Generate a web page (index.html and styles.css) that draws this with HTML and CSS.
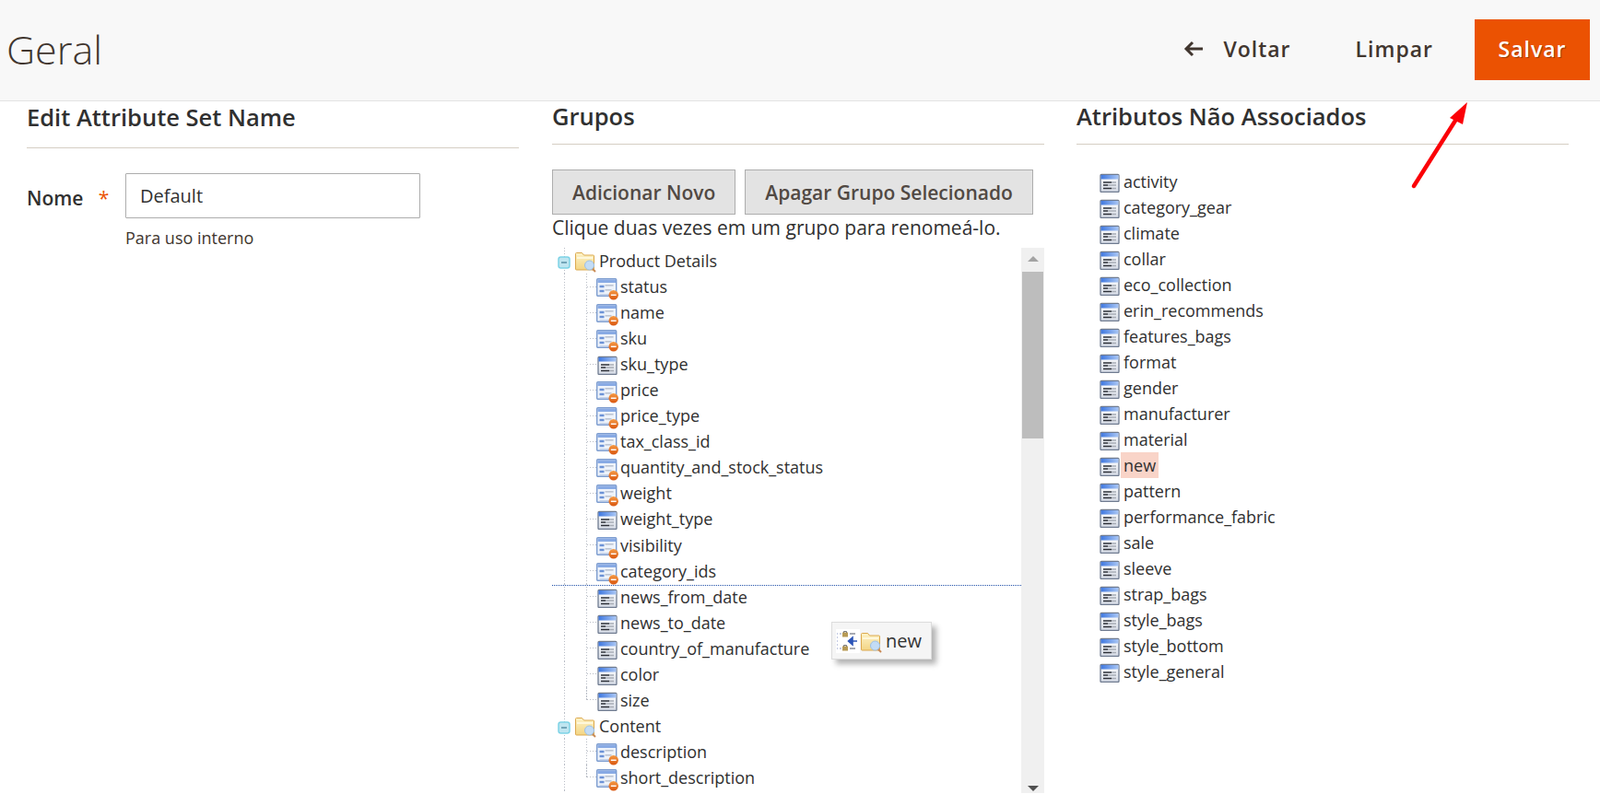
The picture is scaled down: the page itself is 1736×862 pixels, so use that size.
FILE: index.html
```html
<!DOCTYPE html>
<html lang="pt">
<head>
<meta charset="utf-8">
<title>Geral</title>
<link rel="stylesheet" href="styles.css">
</head>
<body>
<svg class="defs" width="0" height="0" aria-hidden="true">
  <defs>
    <linearGradient id="bar" x1="0" y1="0" x2="1" y2="0"><stop offset="0" stop-color="#3f78e0"/><stop offset="1" stop-color="#a9c6f4"/></linearGradient>
    <linearGradient id="body" x1="0" y1="0" x2="0" y2="1"><stop offset="0" stop-color="#ffffff"/><stop offset="1" stop-color="#d5dbe6"/></linearGradient>
    <linearGradient id="folder" x1="0" y1="0" x2="0" y2="1"><stop offset="0" stop-color="#fdf3c8"/><stop offset="1" stop-color="#f3d584"/></linearGradient>
    <linearGradient id="orange" x1="0" y1="0" x2="0" y2="1"><stop offset="0" stop-color="#f59a45"/><stop offset="1" stop-color="#d9560f"/></linearGradient>
    <symbol id="attr" viewBox="-1 -3 24 24">
      <rect x="1" y="1.500" width="20" height="19" rx="1" fill="url(#body)" stroke="#6f7b90" stroke-width="1.300"/>
      <rect x="1.500" y="2" width="19" height="4.500" fill="url(#bar)"/>
      <path d="M4 10h9M4 13h5M4 16.500h9" stroke="#2d3038" stroke-width="1.600"/>
      <path d="M13 10h5M9 13h9M13 16.500h5" stroke="#a7acb5" stroke-width="1.300"/>
    </symbol>
    <symbol id="attr-locked" viewBox="0 0 24 24" overflow="visible">
      <rect x="0.700" y="3.700" width="21" height="18.600" rx="1" fill="#eef3fb" stroke="#7c9ccf" stroke-width="1.400"/>
      <rect x="1.500" y="4.500" width="19.500" height="3.500" fill="#88aae4"/>
      <path d="M3.500 12h5M3.500 17h5" stroke="#6d93d6" stroke-width="2.600"/>
      <path d="M9.500 10.800h9M9.500 15.800h7" stroke="#aeb7c6" stroke-width="1.200"/>
      <path d="M3.500 20.500h13" stroke="#c5d3ea" stroke-width="1"/>
      <circle cx="18.700" cy="21.300" r="5.200" fill="url(#orange)"/>
      <path d="M15.800 21.300h5.800" stroke="#ffffff" stroke-width="1.500"/>
    </symbol>
    <symbol id="folder-search" viewBox="0 -1 25 24" overflow="visible">
      <path d="M1.500 20V3.500q0-1 1-1h6l2 2.500h10q1 0 1 1V20q0 1-1 1h-18q-1 0-1-1z" fill="url(#folder)" stroke="#dca94e"/>
      <path d="M3 8h17" stroke="#fffbe8" stroke-width="1.500"/>
      <path d="M19 19l4 4" stroke="#c98a55" stroke-width="2"/>
      <circle cx="16.500" cy="16" r="5" fill="#c3dcf5" stroke="#9cc0e6"/>
    </symbol>
    <symbol id="minus-box" viewBox="0 0 14 14">
      <rect x="1" y="1" width="12" height="12" rx="2.500" fill="#bfe5f0" stroke="#7ed3e6" stroke-width="1.500"/>
      <path d="M4 7h6" stroke="#5a8fa6" stroke-width="1.500"/>
    </symbol>
    <symbol id="drop-icon" viewBox="0 0 26 26">
      <path d="M1 5h1M1 9h1M1 13h1M1 17h1M1 21h1" stroke="#8a97c8"/>
      <path d="M4 5h2M4 21h2" stroke="#8a97c8"/>
      <rect x="7" y="3.500" width="6" height="5" fill="#b79a55"/>
      <rect x="7" y="18.500" width="6" height="5" fill="#b79a55"/>
      <path d="M8.500 4V2.500h3V4M8.500 19v-1.500h3V19" fill="none" stroke="#777"/>
      <path d="M15 5h6M15 21h6" stroke="#8a8f99" stroke-width="1.400"/>
      <path d="M23 13H14M18 9l-4.500 4 4.500 4z" fill="#2c55b8" stroke="#2c55b8" stroke-width="1.600"/>
    </symbol>
  </defs>
</svg>

<header class="page-header">
  <h1 class="page-title">Geral</h1>
  <nav class="actions">
    <button class="action action-back" type="button">
      <svg class="back-icon" width="22" height="18" viewBox="0 0 22 18"><path d="M21 9H3M10 2L3 9l7 7" fill="none" stroke="#41362f" stroke-width="3"/></svg>
      Voltar
    </button>
    <button class="action action-reset" type="button">Limpar</button>
    <button class="action action-save" type="button">Salvar</button>
  </nav>
</header>

<main class="columns">
  <section class="column column-name">
    <h2 class="section-title">Edit Attribute Set Name</h2>
    <div class="field">
      <label class="field-label" for="set-name">Nome <span class="required">*</span></label>
      <div class="field-control">
        <input id="set-name" class="text-input" type="text" value="Default">
        <div class="field-note">Para uso interno</div>
      </div>
    </div>
  </section>

  <section class="column column-groups">
    <h2 class="section-title">Grupos</h2>
    <div class="group-buttons">
      <button class="grey-button" type="button">Adicionar Novo</button>
      <button class="grey-button" type="button">Apagar Grupo Selecionado</button>
    </div>
    <p class="hint">Clique duas vezes em um grupo para renomeá-lo.</p>
    <div class="tree-pane">
      <div class="tree">
        <div class="group-row"><svg class="tog"><use href="#minus-box"/></svg><svg class="folder"><use href="#folder-search"/></svg><span>Product Details</span></div>
        <div class="leaf"><svg class="ic"><use href="#attr-locked"/></svg><span>status</span></div>
        <div class="leaf"><svg class="ic"><use href="#attr-locked"/></svg><span>name</span></div>
        <div class="leaf"><svg class="ic"><use href="#attr-locked"/></svg><span>sku</span></div>
        <div class="leaf"><svg class="ic"><use href="#attr"/></svg><span>sku_type</span></div>
        <div class="leaf"><svg class="ic"><use href="#attr-locked"/></svg><span>price</span></div>
        <div class="leaf"><svg class="ic"><use href="#attr-locked"/></svg><span>price_type</span></div>
        <div class="leaf"><svg class="ic"><use href="#attr-locked"/></svg><span>tax_class_id</span></div>
        <div class="leaf"><svg class="ic"><use href="#attr-locked"/></svg><span>quantity_and_stock_status</span></div>
        <div class="leaf"><svg class="ic"><use href="#attr-locked"/></svg><span>weight</span></div>
        <div class="leaf"><svg class="ic"><use href="#attr"/></svg><span>weight_type</span></div>
        <div class="leaf"><svg class="ic"><use href="#attr-locked"/></svg><span>visibility</span></div>
        <div class="leaf"><svg class="ic"><use href="#attr-locked"/></svg><span>category_ids</span></div>
        <div class="leaf"><svg class="ic"><use href="#attr"/></svg><span>news_from_date</span></div>
        <div class="leaf"><svg class="ic"><use href="#attr"/></svg><span>news_to_date</span></div>
        <div class="leaf"><svg class="ic"><use href="#attr"/></svg><span>country_of_manufacture</span></div>
        <div class="leaf"><svg class="ic"><use href="#attr"/></svg><span>color</span></div>
        <div class="leaf leaf-last"><svg class="ic"><use href="#attr"/></svg><span>size</span></div>
        <div class="group-row"><svg class="tog"><use href="#minus-box"/></svg><svg class="folder"><use href="#folder-search"/></svg><span>Content</span></div>
        <div class="leaf"><svg class="ic"><use href="#attr-locked"/></svg><span>description</span></div>
        <div class="leaf leaf-last"><svg class="ic"><use href="#attr-locked"/></svg><span>short_description</span></div>
        <div class="rail"></div>
        <div class="drop-line"></div>
        <div class="drag-ghost"><svg class="drop-ic"><use href="#drop-icon"/></svg><svg class="folder"><use href="#folder-search"/></svg><span>new</span></div>
      </div>
      <div class="scrollbar">
        <div class="scroll-up"></div>
        <div class="scroll-thumb"></div>
        <div class="scroll-space"></div>
        <div class="scroll-down"></div>
      </div>
    </div>
  </section>

  <section class="column column-free">
    <h2 class="section-title">Atributos Não Associados</h2>
    <ul class="free-list">
      <li><svg class="ic"><use href="#attr"/></svg><span>activity</span></li>
      <li><svg class="ic"><use href="#attr"/></svg><span>category_gear</span></li>
      <li><svg class="ic"><use href="#attr"/></svg><span>climate</span></li>
      <li><svg class="ic"><use href="#attr"/></svg><span>collar</span></li>
      <li><svg class="ic"><use href="#attr"/></svg><span>eco_collection</span></li>
      <li><svg class="ic"><use href="#attr"/></svg><span>erin_recommends</span></li>
      <li><svg class="ic"><use href="#attr"/></svg><span>features_bags</span></li>
      <li><svg class="ic"><use href="#attr"/></svg><span>format</span></li>
      <li><svg class="ic"><use href="#attr"/></svg><span>gender</span></li>
      <li><svg class="ic"><use href="#attr"/></svg><span>manufacturer</span></li>
      <li><svg class="ic"><use href="#attr"/></svg><span>material</span></li>
      <li><svg class="ic"><use href="#attr"/></svg><span class="selected">new</span></li>
      <li><svg class="ic"><use href="#attr"/></svg><span>pattern</span></li>
      <li><svg class="ic"><use href="#attr"/></svg><span>performance_fabric</span></li>
      <li><svg class="ic"><use href="#attr"/></svg><span>sale</span></li>
      <li><svg class="ic"><use href="#attr"/></svg><span>sleeve</span></li>
      <li><svg class="ic"><use href="#attr"/></svg><span>strap_bags</span></li>
      <li><svg class="ic"><use href="#attr"/></svg><span>style_bags</span></li>
      <li><svg class="ic"><use href="#attr"/></svg><span>style_bottom</span></li>
      <li><svg class="ic"><use href="#attr"/></svg><span>style_general</span></li>
    </ul>
  </section>
</main>

<svg class="red-arrow" width="70" height="100" viewBox="0 0 70 100" aria-hidden="true">
  <path d="M4 96L49 25" stroke="#fb0007" stroke-width="4.500" stroke-linecap="round"/>
  <path d="M62 5L57 29 43 22z" fill="#fb0007"/>
</svg>
</body>
</html>
```
FILE: styles.css
```css
* { box-sizing: border-box; }
html, body { margin: 0; height: 100%; overflow: hidden; }
body {
  position: relative;
  background: #fff;
  color: #303030;
  font-family: "Open Sans", sans-serif;
  font-size: 16px;
}
.defs { position: absolute; }
.page-header {
  display: flex;
  align-items: center;
  justify-content: space-between;
  height: 110px;
  padding: 0 11px 2px 7px;
  background: #f8f8f8;
  border-bottom: 1px solid #e3e3e3;
}
.page-title {
  margin: 0;
  color: #41362f;
  font-size: 43px;
  font-weight: 300;
  line-height: 1.2;
}
.actions { display: flex; align-items: center; }
.action {
  display: flex;
  align-items: center;
  border: 0;
  background: none;
  color: #41362f;
  font: 600 23px "Open Sans", sans-serif;
  letter-spacing: 1px;
  padding: 0 0 2px;
}
.back-icon { margin-right: 21px; }
.action-back { margin-right: 70px; }
.action-reset { margin-right: 45px; }
.action-save {
  justify-content: center;
  width: 125px;
  height: 66px;
  background: #eb5202;
  color: #fff;
  text-shadow: 1px 1px 0 #a53a02;
}
.columns {
  display: grid;
  grid-template-columns: 535px 534px 534px;
  gap: 35px;
  padding-left: 29px;
}
.column { min-width: 0; }
.column-name { padding-right: 1px; }
.section-title {
  margin: 0;
  height: 47px;
  border-bottom: 1px solid #d5cec3;
  color: #303030;
  font-size: 25.5px;
  font-weight: 600;
  line-height: 32px;
}
.column-name .section-title { height: 51px; padding-top: 1px; }
.field { display: flex; margin-top: 27px; }
.field-label {
  width: 107px;
  padding-top: 13px;
  font-size: 21px;
  font-weight: 600;
}
.required { margin-left: 11px; color: #eb5202; font-weight: 400; }
.text-input {
  display: block;
  width: 320px;
  height: 49px;
  padding: 0 15px;
  border: 1px solid #adadad;
  border-radius: 1px;
  color: #303030;
  font: 400 20px "Open Sans", sans-serif;
}
.field-note { margin-top: 10px; color: #41362f; font-size: 18px; line-height: 22px; }
.group-buttons { display: flex; gap: 10px; margin-top: 27px; }
.grey-button {
  height: 49px;
  padding: 0 21px;
  background: #e3e3e3;
  border: 1px solid #adadad;
  color: #514943;
  font: 600 21px "Open Sans", sans-serif;
}
.hint { margin: 0; height: 36px; font-size: 21px; line-height: 28px; color: #303030; }
.tree-pane { display: flex; height: 592px; }
.tree {
  position: relative;
  flex: 1;
  overflow: hidden;
  font-size: 18px;
}
.group-row {
  display: flex;
  align-items: center;
  height: 28.05px;
  padding-left: 6px;
  background: linear-gradient(#b9bdc6 50%, transparent 50%) 13px 0 / 1px 3px repeat-y;
}
.group-row span { margin-left: 2px; }
.tog { width: 14px; height: 14px; flex: none; margin-top: 4px; }
.folder { width: 25px; height: 24px; flex: none; margin-left: 4px; overflow: visible; }
.leaf {
  display: flex;
  align-items: center;
  height: 28.05px;
  padding-left: 38px;
  background:
    linear-gradient(#b9bdc6 50%, transparent 50%) 13px 0 / 1px 3px repeat-y,
    linear-gradient(#b9bdc6 50%, transparent 50%) 37px 0 / 1px 3px repeat-y;
}
.leaf::before {
  content: "";
  flex: none;
  width: 10px;
  height: 1px;
  background: linear-gradient(90deg, #b9bdc6 50%, transparent 50%) 0 0 / 3px 1px repeat-x;
}
.leaf-last {
  background:
    linear-gradient(#b9bdc6 50%, transparent 50%) 13px 0 / 1px 3px repeat-y,
    linear-gradient(#b9bdc6 50%, transparent 50%) 37px 0 / 1px 3px no-repeat,
    linear-gradient(#b9bdc6 50%, transparent 50%) 37px 3px / 1px 3px no-repeat,
    linear-gradient(#b9bdc6 50%, transparent 50%) 37px 6px / 1px 3px no-repeat,
    linear-gradient(#b9bdc6 50%, transparent 50%) 37px 9px / 1px 3px no-repeat,
    linear-gradient(#b9bdc6 50%, transparent 50%) 37px 12px / 1px 3px no-repeat;
}
.rail {
  height: 28px;
  background: linear-gradient(#b9bdc6 50%, transparent 50%) 13px 0 / 1px 3px repeat-y;
}
.ic { width: 24px; height: 24px; flex: none; overflow: visible; }
.leaf span { margin-left: 2px; }
.drop-line {
  position: absolute;
  left: 0;
  right: 0;
  top: 366px;
  border-top: 1px dotted #1f4fa8;
}
.drag-ghost {
  position: absolute;
  left: 303px;
  top: 406px;
  display: flex;
  align-items: center;
  width: 109px;
  height: 41px;
  padding-left: 4px;
  background: #f5f5f5;
  border: 1px solid #dcdcdc;
  box-shadow: 5px 5px 6px rgba(0, 0, 0, .3);
  font-size: 20px;
}
.drag-ghost .folder { margin-left: 0; }
.drag-ghost span { margin-left: 3px; color: #333; }
.drop-ic { width: 26px; height: 26px; flex: none; background: #fff; }
.scrollbar {
  display: flex;
  flex-direction: column;
  align-items: center;
  width: 25px;
  flex: none;
  background: #f0f0f0;
}
.scroll-up {
  width: 0;
  margin-top: 9px;
  border: 6px solid transparent;
  border-top: 0;
  border-bottom: 6px solid #a3a3a3;
}
.scroll-thumb { width: 23px; height: 181px; margin-top: 11px; background: #bdbdbd; }
.scroll-space { flex: 1; }
.scroll-down {
  width: 0;
  margin-bottom: 2px;
  border: 6px solid transparent;
  border-bottom: 0;
  border-top: 6px solid #505050;
}
.free-list { margin: 26px 0 0; padding: 0 0 0 24px; list-style: none; font-size: 18px; color: #303030; }
.free-list li { display: flex; align-items: center; height: 28px; }
.free-list span { padding: 0 3px; line-height: 28px; }
.free-list .selected { background: #f9d4c8; }
.red-arrow { position: absolute; left: 1530px; top: 106px; }
```
